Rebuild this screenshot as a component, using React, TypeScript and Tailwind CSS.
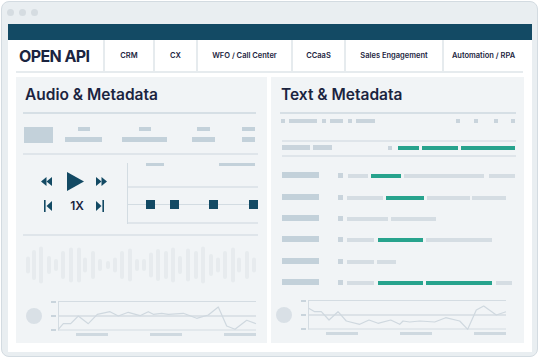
import React from "react";

const navy = "#1b2440";
const dark = "#134a64";

const navItems = [
  { label: "CRM", w: "w-[50px]" },
  { label: "CX", w: "w-[43px]" },
  { label: "WFO / Call Center", w: "w-[95px]" },
  { label: "CCaaS", w: "w-[53px]" },
  { label: "Sales Engagement", w: "w-[98px]" },
  { label: "Automation / RPA", w: "w-[81px]" },
];

// waveform bars: [x, height]
const wave: [number, number][] = [
  [28, 17], [34, 30], [41, 37], [49, 18], [56, 12], [63, 28], [71, 35], [79, 35],
  [85, 15], [93, 28], [100, 12], [108, 8], [115, 15], [122, 28], [130, 33], [137, 12],
  [144, 12], [151, 25], [158, 32], [166, 28], [173, 35], [180, 18], [188, 33], [196, 28],
  [203, 37], [211, 22], [218, 15], [225, 28], [233, 35], [239, 15], [247, 28], [254, 15],
];

const leftLine =
  "10.3,29.3 15.3,23.7 22.7,23.7 30.3,16 40.3,23.7 49.3,14.3 62,11.7 70.3,16 80.3,12.3 92,15.7 100.3,11.7 105.3,14.3 113.7,13.3 120.3,14.3 135.3,13.3 148.7,18.3 160.3,15 170.3,7 178.7,26 187,29.3 198.7,20.3 208,23.7";
const rightLine =
  "10.7,9.3 16.7,12.7 23.3,12.7 31,21 40,12.7 48.3,22 61.7,25.3 71,21 80,24.3 92.7,21 101.7,25.3 105,22 111.7,23 121.7,22 136.7,23 147.7,18.7 161.7,22 169.7,30.3 178.3,11 185.7,7 198.3,16 208,12.7";

function ChartRow({ line }: { line: string }) {
  return (
    <div className="flex mt-[14px] h-[38px]">
      <div className="ml-[3px] mt-[8px] w-[16px] h-[16px] rounded-full bg-[#d9e0e6]" />
      <svg width="210" height="38" className="ml-[6px]">
        <rect x="3" y="1" width="5" height="2" fill="#c9d4dc" />
        <rect x="3" y="15" width="5" height="2" fill="#c9d4dc" />
        <rect x="3" y="29" width="5" height="2" fill="#c9d4dc" />
        <line x1="10" y1="1.5" x2="208" y2="1.5" stroke="#d4dce2" strokeWidth="1" />
        <line x1="10" y1="16" x2="208" y2="16" stroke="#d4dce2" strokeWidth="1.3" />
        <line x1="10" y1="30" x2="208" y2="30" stroke="#d4dce2" strokeWidth="1" />
        <line x1="10.5" y1="1" x2="10.5" y2="30.5" stroke="#d4dce2" strokeWidth="1" />
        <polyline points={line} fill="none" stroke="#cfd8df" strokeWidth="1.2" strokeLinejoin="round" />
        <rect x="28" y="33" width="32" height="3" fill="#cfd9e0" />
        <rect x="102" y="33" width="32" height="3" fill="#cfd9e0" />
        <rect x="176" y="33" width="32" height="3" fill="#cfd9e0" />
      </svg>
    </div>
  );
}

function Bar({ ml, w, green }: { ml: string; w: string; green?: boolean }) {
  return <div className={`${ml} ${w} h-[4px] ${green ? "bg-[#27a38d]" : "bg-[#d5dde3]"}`} />;
}

function TextRow({ mt, children }: { mt: string; children: React.ReactNode }) {
  return (
    <div className={`flex items-end ${mt} h-[6px]`}>
      <div className="ml-[2px] w-[37px] h-[6px] bg-[#c3d1da]" />
      <div className="ml-[19px] w-[5px] h-[5px] bg-[#c9d4dc]" />
      {children}
    </div>
  );
}

function LeftPanel() {
  return (
    <div className="flex-1 bg-[#f1f4f6] flex flex-col pl-[7px]">
      <div className="mt-[9px] ml-[2px] text-[15.5px] leading-[18px] font-semibold" style={{ color: navy }}>
        Audio &amp; Metadata
      </div>
      <div className="mt-[8px] w-[233px] h-[2px] bg-[#d6dfe5]" />

      <div className="flex mt-[13px] h-[16px]">
        <div className="ml-[1px] w-[29px] h-[16px] bg-[#c3d1da]" />
        <div className="ml-[12px] w-[37px] flex flex-col items-center">
          <div className="w-[12px] h-[4px] bg-[#c3d1da]" />
          <div className="mt-[6px] w-[37px] h-[5px] bg-[#c3d1da]" />
        </div>
        <div className="ml-[20px] w-[45px] flex flex-col items-center">
          <div className="w-[12px] h-[4px] bg-[#c3d1da]" />
          <div className="mt-[6px] w-[45px] h-[5px] bg-[#c3d1da]" />
        </div>
        <div className="ml-[25px] w-[23px] flex flex-col items-center">
          <div className="w-[13px] h-[4px] bg-[#c3d1da]" />
          <div className="mt-[6px] w-[23px] h-[5px] bg-[#c3d1da]" />
        </div>
        <div className="ml-[27px] w-[13px] flex flex-col items-center">
          <div className="w-[13px] h-[4px] bg-[#c3d1da]" />
          <div className="mt-[6px] w-[13px] h-[5px] bg-[#c3d1da]" />
        </div>
      </div>

      <div className="mt-[10px] w-[235px] h-[2px] bg-[#dfe5ea]" />

      <div className="flex mt-[8px] h-[62px]">
        <div className="w-[104px] flex flex-col">
          <div className="flex items-center mt-[9px] h-[19px]">
            <svg width="11" height="9" className="ml-[18px]" fill={dark}>
              <polygon points="5.5,0 0,4.5 5.5,9" />
              <polygon points="11,0 5.5,4.5 11,9" />
            </svg>
            <svg width="17" height="19" className="ml-[15px]" fill={dark}>
              <polygon points="0,0 17,9.5 0,19" />
            </svg>
            <svg width="11" height="9" className="ml-[12px]" fill={dark}>
              <polygon points="0,0 5.5,4.5 0,9" />
              <polygon points="5.5,0 11,4.5 5.5,9" />
            </svg>
          </div>
          <div className="flex items-center mt-[9px] h-[12px]">
            <svg width="8" height="12" className="ml-[21px]" fill={dark}>
              <rect x="0" y="0" width="1.6" height="12" />
              <polygon points="8,1 2.5,6 8,11" />
            </svg>
            <div className="ml-[15px] w-[20px] text-center text-[12px] leading-[12px] font-semibold" style={{ color: navy }}>
              1X
            </div>
            <svg width="8" height="12" className="ml-[9px]" fill={dark}>
              <polygon points="0,1 5.5,6 0,11" />
              <rect x="6.4" y="0" width="1.6" height="12" />
            </svg>
          </div>
        </div>
        <div className="w-[131px] flex flex-col border-l border-[#d3dce2] h-[61px]">
          <div className="flex h-[3px]">
            <div className="ml-[18px] w-[18px] h-[3px] bg-[#c3d1da]" />
            <div className="ml-[55px] w-[36px] h-[3px] bg-[#c3d1da]" />
          </div>
          <div className="mt-[20px] h-[2px] bg-[#dfe5ea]" />
          <div className="flex items-center mt-[12px] h-[9px]">
            <div className="w-[18px] h-[1.5px] bg-[#d3dce2]" />
            <div className="w-[9px] h-[9px] bg-[#134a64]" />
            <div className="w-[15px] h-[1.5px] bg-[#d3dce2]" />
            <div className="w-[9px] h-[9px] bg-[#134a64]" />
            <div className="w-[31px] h-[1.5px] bg-[#d3dce2]" />
            <div className="w-[9px] h-[9px] bg-[#134a64]" />
            <div className="w-[31px] h-[1.5px] bg-[#d3dce2]" />
            <div className="w-[9px] h-[9px] bg-[#134a64] shrink-0" />
          </div>
          <div className="mt-[13px] h-[2px] bg-[#dfe5ea]" />
        </div>
      </div>

      <div className="mt-[9px] w-[235px] h-[2px] bg-[#dfe5ea]" />

      <svg width="240" height="42" className="mt-[8px]">
        {wave.map(([x, h], i) => (
          <rect key={i} x={x - 23 - 2} y={21 - h / 2} width="4" height={h} rx="2" fill="#e7ebee" />
        ))}
      </svg>

      <ChartRow line={leftLine} />
    </div>
  );
}

function RightPanel() {
  return (
    <div className="flex-1 bg-[#f1f4f6] flex flex-col pl-[9px]">
      <div className="mt-[9px] ml-[1px] text-[15.5px] leading-[18px] font-semibold" style={{ color: navy }}>
        Text &amp; Metadata
      </div>
      <div className="mt-[8px] w-[236px] h-[2px] bg-[#d6dfe5]" />

      <div className="flex mt-[5px] h-[4px]">
        <div className="ml-[1px] w-[4px] h-[4px] bg-[#c9d4dc]" />
        <div className="ml-[4px] w-[28px] h-[4px] bg-[#c9d4dc]" />
        <div className="ml-[5px] w-[4px] h-[4px] bg-[#c9d4dc]" />
        <div className="ml-[4px] w-[13px] h-[4px] bg-[#c9d4dc]" />
        <div className="ml-[5px] w-[4px] h-[4px] bg-[#c9d4dc]" />
        <div className="ml-[4px] w-[19px] h-[4px] bg-[#c9d4dc]" />
        <div className="ml-[81px] w-[4px] h-[4px] bg-[#c9d4dc]" />
        <div className="ml-[14px] w-[4px] h-[4px] bg-[#c9d4dc]" />
        <div className="ml-[16px] w-[4px] h-[4px] bg-[#c9d4dc]" />
        <div className="ml-[13px] w-[4px] h-[4px] bg-[#c9d4dc]" />
      </div>

      <div className="mt-[17px] ml-[2px] w-[234px] h-[2px] bg-[#dfe5ea]" />

      <div className="flex items-end mt-[3px] h-[5px]">
        <div className="ml-[2px] w-[28px] h-[5px] bg-[#c9d4dc]" />
        <div className="ml-[3px] w-[19px] h-[5px] bg-[#c9d4dc]" />
        <div className="ml-[56px] w-[4px] h-[4px] bg-[#c9d4dc]" />
        <Bar ml="ml-[6px]" w="w-[21px]" green />
        <Bar ml="ml-[3px]" w="w-[36px]" green />
        <Bar ml="ml-[3px]" w="w-[54px]" green />
      </div>

      <div className="mt-[5px] ml-[2px] w-[234px] h-[2px] bg-[#dfe5ea]" />

      <TextRow mt="mt-[15px]">
        <Bar ml="ml-[5px]" w="w-[20px]" />
        <Bar ml="ml-[3px]" w="w-[30px]" green />
        <Bar ml="ml-[3px]" w="w-[80px]" />
        <Bar ml="ml-[5px]" w="w-[26px]" />
      </TextRow>
      <TextRow mt="mt-[16px]">
        <Bar ml="ml-[4px]" w="w-[36px]" />
        <Bar ml="ml-[3px]" w="w-[38px]" green />
        <Bar ml="ml-[3px]" w="w-[43px]" />
        <Bar ml="ml-[2px]" w="w-[34px]" />
      </TextRow>
      <TextRow mt="mt-[15px]">
        <Bar ml="ml-[4px]" w="w-[41px]" />
        <Bar ml="ml-[3px]" w="w-[45px]" />
      </TextRow>
      <TextRow mt="mt-[15px]">
        <Bar ml="ml-[4px]" w="w-[27px]" />
        <Bar ml="ml-[4px]" w="w-[45px]" green />
        <Bar ml="ml-[3px]" w="w-[66px]" />
      </TextRow>
      <TextRow mt="mt-[16px]">
        <Bar ml="ml-[4px]" w="w-[27px]" />
        <Bar ml="ml-[3px]" w="w-[19px]" />
      </TextRow>
      <TextRow mt="mt-[15px]">
        <Bar ml="ml-[4px]" w="w-[27px]" />
        <Bar ml="ml-[4px]" w="w-[45px]" green />
        <Bar ml="ml-[3px]" w="w-[66px]" green />
        <Bar ml="ml-[4px]" w="w-[16px]" />
      </TextRow>

      <div className="-ml-[7px]">
        <ChartRow line={rightLine} />
      </div>
    </div>
  );
}

export default function App() {
  return (
    <div className="w-[540px] h-[360px] bg-white pl-px pt-px" style={{ fontFamily: "Inter, 'Noto Sans', sans-serif" }}>
      <div className="w-[537px] h-[356px] rounded-[8px] border border-[#d3dbe1] bg-[#e9eef1] pt-[7px] pl-[6px] pr-[5px] pb-[4px] flex flex-col">
        <div className="flex gap-[5px] -ml-px h-[7px]">
          <div className="w-[7px] h-[7px] rounded-full bg-[#d5dce1]" />
          <div className="w-[7px] h-[7px] rounded-full bg-[#d5dce1]" />
          <div className="w-[7px] h-[7px] rounded-full bg-[#d5dce1]" />
        </div>
        <div className="mt-[8px] flex-1 bg-white flex flex-col">
          <div className="h-[16px] bg-[#134a64]" />
          <div className="flex h-[31px]">
            <div className="w-[95px] flex items-center pl-[11px]">
              <span className="text-[16px] font-bold tracking-[-0.6px] leading-none" style={{ color: navy }}>
                OPEN API
              </span>
            </div>
            {navItems.map((n) => (
              <div
                key={n.label}
                className={`${n.w} border-l-2 border-[#e6ebee] flex items-center justify-center text-[7.5px] font-semibold whitespace-nowrap`}
                style={{ color: navy }}
              >
                {n.label}
              </div>
            ))}
          </div>
          <div className="mx-2 w-[507px] h-[2px] bg-[#e6ebee]" />
          <div className="flex gap-1 px-2 mt-[4px] h-[266px]">
            <LeftPanel />
            <RightPanel />
          </div>
        </div>
      </div>
    </div>
  );
}
